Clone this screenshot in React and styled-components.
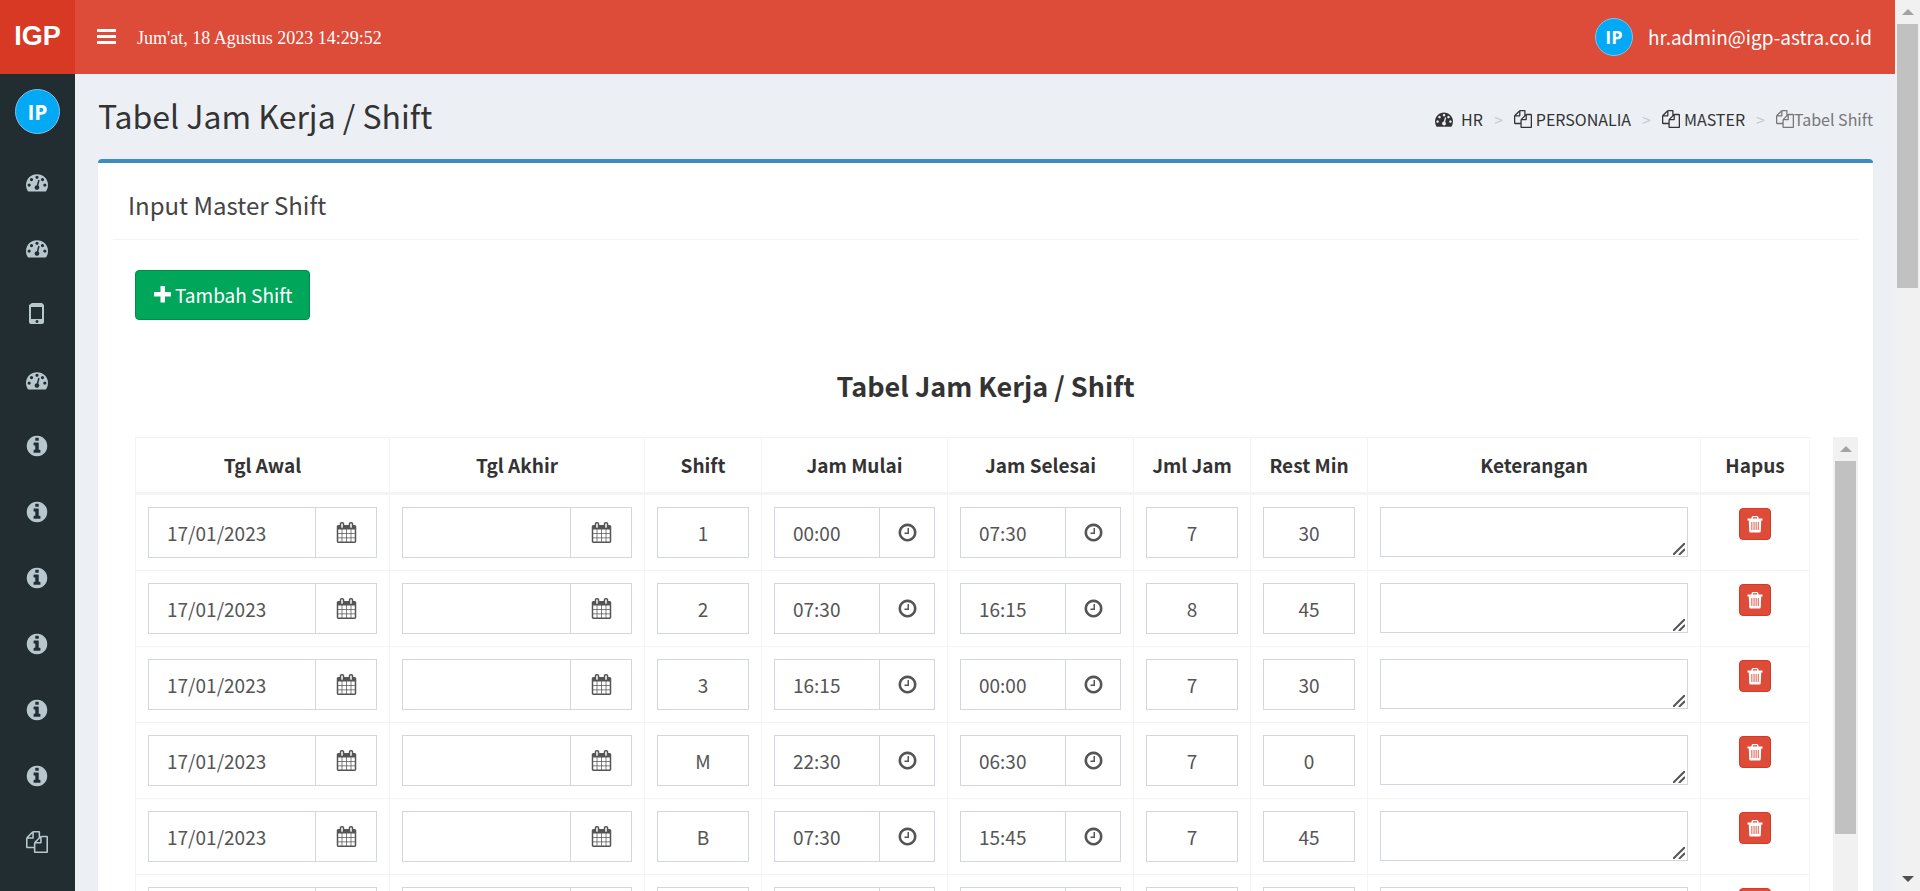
import React, { useState } from "react";
import styled, { createGlobalStyle } from "styled-components";

const GlobalStyle = createGlobalStyle`
  *, *::before, *::after { box-sizing: border-box; }
  body {
    margin: 0;
    font-family: "Noto Sans CJK SC", "Noto Sans", sans-serif;
    font-size: 19px;
    line-height: 27px;
    color: #333;
    background: #ecf0f5;
  }
`;

const ICONS = {
  gauge:
    "M384 1152q0-53-37.5-90.5t-90.5-37.5-90.5 37.5-37.5 90.5 37.5 90.5 90.5 37.5 90.5-37.5 37.5-90.5zm192-448q0-53-37.5-90.5t-90.5-37.5-90.5 37.5-37.5 90.5 37.5 90.5 90.5 37.5 90.5-37.5 37.5-90.5zm428 481l101-382q6-26-7.5-48.5t-38.5-29.5-48 6.5-30 39.5l-101 382q-60 5-107 43.5t-63 98.5q-20 77 20 146t117 89 146-20 89-117q16-60-6-117t-72-91zm660-33q0-53-37.5-90.5t-90.5-37.5-90.5 37.5-37.5 90.5 37.5 90.5 90.5 37.5 90.5-37.5 37.5-90.5zm-640-640q0-53-37.5-90.5t-90.5-37.5-90.5 37.5-37.5 90.5 37.5 90.5 90.5 37.5 90.5-37.5 37.5-90.5zm448 192q0-53-37.5-90.5t-90.5-37.5-90.5 37.5-37.5 90.5 37.5 90.5 90.5 37.5 90.5-37.5 37.5-90.5zm320 448q0 261-141 483-19 29-54 29h-1402q-35 0-54-29-141-221-141-483 0-182 71-348t191-286 286-191 348-71 348 71 286 191 191 286 71 348z",
  files:
    "M1696 384q40 0 68 28t28 68v1216q0 40-28 68t-68 28h-960q-40 0-68-28t-28-68v-288h-544q-40 0-68-28t-28-68v-672q0-40 20-88t48-76l408-408q28-28 76-48t88-20h416q40 0 68 28t28 68v328q68-40 128-40h416zm-544 213l-299 299h299v-299zm-640-384l-299 299h299v-299zm196 647l316-316v-416h-384v416q0 40-28 68t-68 28h-416v640h512v-256q0-40 20-88t48-76zm956 804v-1152h-384v416q0 40-28 68t-68 28h-416v640h896z",
  info:
    "M1152 1376v-160q0-14-9-23t-23-9h-96v-512q0-14-9-23t-23-9h-320q-14 0-23 9t-9 23v160q0 14 9 23t23 9h96v320h-96q-14 0-23 9t-9 23v160q0 14 9 23t23 9h448q14 0 23-9t9-23zm-128-896v-160q0-14-9-23t-23-9h-192q-14 0-23 9t-9 23v160q0 14 9 23t23 9h192q14 0 23-9t9-23zm640 416q0 209-103 385.5t-279.5 279.5-385.5 103-385.5-103-279.5-279.5-103-385.5 103-385.5 279.5-279.5 385.5-103 385.5 103 279.5 279.5 103 385.5z",
  clock:
    "M1024 544v448q0 14-9 23t-23 9h-320q-14 0-23-9t-9-23v-64q0-14 9-23t23-9h224v-352q0-14 9-23t23-9h64q14 0 23 9t9 23zm416 352q0-148-73-273t-198-198-273-73-273 73-198 198-73 273 73 273 198 198 273 73 273-73 198-198 73-273zm224 0q0 209-103 385.5t-279.5 279.5-385.5 103-385.5-103-279.5-279.5-103-385.5 103-385.5 279.5-279.5 385.5-103 385.5 103 279.5 279.5 103 385.5z",
  calendar:
    "M192 1664h288v-288h-288v288zm352 0h320v-288h-320v288zm-352-352h288v-320h-288v320zm352 0h320v-320h-320v320zm-352-384h288v-288h-288v288zm736 736h320v-288h-320v288zm-384-736h320v-288h-320v288zm768 736h288v-288h-288v288zm-384-352h320v-320h-320v320zm-352-864v-288q0-13-9.5-22.5t-22.5-9.5h-64q-13 0-22.5 9.5t-9.5 22.5v288q0 13 9.5 22.5t22.5 9.5h64q13 0 22.5-9.5t9.5-22.5zm736 864h288v-320h-288v320zm-384-384h320v-288h-320v288zm384 0h288v-288h-288v288zm32-480v-288q0-13-9.5-22.5t-22.5-9.5h-64q-13 0-22.5 9.5t-9.5 22.5v288q0 13 9.5 22.5t22.5 9.5h64q13 0 22.5-9.5t9.5-22.5zm384-64v1280q0 52-38 90t-90 38h-1408q-52 0-90-38t-38-90v-1280q0-52 38-90t90-38h128v-96q0-66 47-113t113-47h64q66 0 113 47t47 113v96h384v-96q0-66 47-113t113-47h64q66 0 113 47t47 113v96h128q52 0 90 38t38 90z",
};

const Svg = styled.svg`
  display: block;
  flex: none;
  fill: currentColor;
`;

const Icon = ({ name, size }) => (
  <Svg width={size} height={size} viewBox="0 0 1792 1792" aria-hidden="true">
    <path d={ICONS[name]} />
  </Svg>
);

const PhoneIcon = () => (
  <Svg width="22" height="22" viewBox="0 0 22 22" aria-hidden="true">
    <path
      fillRule="evenodd"
      d="M6 0h10l2 2v17q0 2-2 2H5q-2 0-2-2V2zM5 4v12h11V4zM11 17a1.500 1.500 0 1 0 .01 0z"
    />
  </Svg>
);

const BarsIcon = () => (
  <Svg width="19" height="16" viewBox="0 0 19 16" aria-hidden="true">
    <path d="M0 0h19v3H0zM0 6h19v3H0zM0 12h19v3H0z" />
  </Svg>
);

const PlusIcon = () => (
  <Svg width="17" height="17" viewBox="0 0 17 17" aria-hidden="true">
    <path d="M7 0h3.500q.5 0 .5.5V6h5.500q.5 0 .5.5V10q0 .5-.5.5H11V16q0 .5-.5.5H7q-.5 0-.5-.5v-5.500H.5Q0 10.500 0 10V6.500Q0 6 .5 6h6V.5Q6.500 0 7 0z" />
  </Svg>
);

const TrashIcon = () => (
  <Svg width="16" height="17" viewBox="0 0 16 17" aria-hidden="true">
    <path
      fillRule="evenodd"
      d="M4.500 2.500V1.500Q4.500 0 6 0h4Q11.500 0 11.500 1.500V2.500H15.500V4.500H14.200L13.800 15q0 1.500-1.500 1.500H3.700Q2.200 16.500 2.200 15L1.800 4.500H.5V2.500zM6 2.500h4V1.300H6zM4.400 6v8h.9V6zM6.600 6v8h.9V6zM8.700 6v8h.9V6zM10.800 6v8h.9V6z"
    />
  </Svg>
);

const Shell = styled.div`
  display: flex;
  height: 100vh;
  overflow: hidden;
`;

const Page = styled.div`
  flex: 1;
  min-width: 0;
  display: grid;
  grid-template-columns: 75px minmax(0, 1fr);
  grid-template-rows: 74px minmax(0, 1fr);
`;

const Brand = styled.a`
  display: flex;
  align-items: center;
  justify-content: center;
  padding-bottom: 2px;
  background: #d73925;
  color: #fff;
  font: bold 27px/40px "Liberation Sans", Arial, sans-serif;
  text-decoration: none;
`;

const TopBar = styled.header`
  display: flex;
  align-items: center;
  padding: 0 23px 0 22px;
  background: #dd4b39;
  color: #fff;
`;

const BareButton = styled.button`
  padding: 0;
  border: 0;
  background: none;
  color: inherit;
  cursor: pointer;
`;

const Clock = styled.time`
  margin: 2px auto 0 21px;
  font: 18px/24px "Liberation Serif", "Times New Roman", serif;
`;

const Account = styled.a`
  display: flex;
  align-items: center;
  gap: 15px;
  color: #fff;
  text-decoration: none;
`;

const AccountName = styled.span`
  padding-bottom: 2px;
`;

const Avatar = styled.span`
  flex: none;
  display: flex;
  align-items: center;
  justify-content: center;
  width: ${(p) => p.$size}px;
  height: ${(p) => p.$size}px;
  border: 1px solid #7cc3ea;
  border-radius: 50%;
  background: #03a9f4;
  color: #fff;
  font: bold ${(p) => p.$font}px/24px "Open Sans", sans-serif;
`;

const Sidebar = styled.nav`
  display: flex;
  flex-direction: column;
  align-items: center;
  padding-top: 15px;
  background: #222d32;
  overflow: hidden;
`;

const SideMenu = styled.ul`
  width: 100%;
  margin: 15px 0 0;
  padding: 0;
  list-style: none;
`;

const SideLink = styled.a`
  display: flex;
  align-items: center;
  justify-content: center;
  height: 66px;
  padding-right: 1px;
  color: #b8c7ce;
`;

const Main = styled.main`
  padding: 0 22px 0 23px;
  overflow: hidden;
`;

const ContentHeader = styled.div`
  display: flex;
  align-items: center;
  justify-content: space-between;
  height: 85px;
`;

const PageTitle = styled.h1`
  margin: 0 0 4px;
  font-size: 32px;
  line-height: 40px;
  font-weight: 400;
`;

const Crumbs = styled.ol`
  display: flex;
  align-items: center;
  margin: 5px 0 0;
  padding: 0;
  list-style: none;
  font-size: 16px;
  line-height: 24px;
`;

const Crumb = styled.li`
  display: flex;
  align-items: center;

  &:not(:first-child)::before {
    content: ">";
    margin: 0 11px;
    color: #ccc;
  }
`;

const CrumbLink = styled.a`
  display: flex;
  align-items: center;
  gap: ${(p) => p.$gap}px;
  color: ${(p) => (p.$active ? "#777" : "#333")};
  text-decoration: none;
`;

const Box = styled.section`
  border-top: 4px solid #3c8dbc;
  border-radius: 4px;
  background: #fff;
  box-shadow: 0 1px 1px rgba(0, 0, 0, 0.1);
  padding: 0 15px;
`;

const BoxTitle = styled.h2`
  margin: 0;
  padding: 26px 15px 18px;
  border-bottom: 1px solid #f4f4f4;
  font-size: 24px;
  line-height: 32px;
  font-weight: 400;
  color: #444;
`;

const BoxBody = styled.div`
  padding: 30px 0 0 22px;
`;

const AddButton = styled.button`
  display: flex;
  align-items: center;
  gap: 4px;
  height: 50px;
  padding: 0 17px 2px 18px;
  border: 1px solid #008d4c;
  border-radius: 4px;
  background: #00a65a;
  color: #fff;
  font: inherit;
  cursor: pointer;
`;

const TableTitle = styled.h3`
  margin: 46px 0 32px;
  font-size: 27px;
  line-height: 39px;
  font-weight: 700;
  text-align: center;
  padding-right: 22px;
`;

const TablePanel = styled.div`
  display: flex;
  gap: 23px;
`;

const Table = styled.table`
  flex: 1;
  min-width: 0;
  table-layout: fixed;
  border-collapse: separate;
  border-spacing: 0;
  border: solid #f4f4f4;
  border-width: 1px 0 0 1px;
`;

const Th = styled.th`
  height: 57px;
  padding: 0 0 2px;
  border: solid #f4f4f4;
  border-width: 0 1px 3px 0;
  font-weight: 700;
`;

const Td = styled.td`
  height: 76px;
  padding: 12px 12px 0;
  border: solid #f4f4f4;
  border-width: 0 1px 1px 0;
  vertical-align: top;
`;

const Group = styled.div`
  display: flex;
`;

const Field = styled.input`
  flex: 1;
  min-width: 0;
  width: 100%;
  height: 51px;
  padding: 0 18px;
  border: 1px solid #d2d6de;
  border-radius: 0;
  background: #fff;
  color: #555;
  font-family: inherit;
  font-size: 19px;
  text-align: ${(p) => (p.$center ? "center" : "left")};
`;

const Addon = styled.button`
  display: flex;
  align-items: center;
  justify-content: center;
  width: ${(p) => p.$width}px;
  padding: 0;
  border: 1px solid #d2d6de;
  border-left: 0;
  background: #fff;
  color: #555;
`;

const NoteWrap = styled.div`
  position: relative;
  display: flex;

  svg {
    position: absolute;
    right: 3px;
    bottom: 2px;
    color: #555;
  }
`;

const Note = styled.textarea`
  display: block;
  width: 100%;
  height: 50px;
  padding: 9px 18px;
  border: 1px solid #d2d6de;
  background: #fff;
  color: #555;
  font: inherit;
  resize: none;
`;

const DeleteButton = styled.button`
  display: flex;
  align-items: center;
  justify-content: center;
  width: 32px;
  height: 32px;
  margin: 1px auto 0;
  padding: 0;
  border: 1px solid #d73925;
  border-radius: 4px;
  background: #dd4b39;
  color: #fff;
`;

const Track = styled.div`
  flex: none;
  display: flex;
  flex-direction: column;
  align-items: center;
  width: 25px;
  background: #f1f1f1;
`;

const Arrow = styled.div`
  display: flex;
  align-items: center;
  justify-content: center;
  width: 25px;
  height: 24px;
  color: ${(p) => (p.$dark ? "#505050" : "#a3a3a3")};
`;

const Thumb = styled.div`
  width: 21px;
  height: ${(p) => p.$height};
  margin-bottom: auto;
  background: #c1c1c1;
`;

const ScrollBar = ({ thumb, down }) => (
  <Track aria-hidden="true">
    <Arrow>
      <Svg width="12" height="6" viewBox="0 0 12 6">
        <path d="M6 0l6 6H0z" />
      </Svg>
    </Arrow>
    <Thumb $height={thumb} />
    {down && (
      <Arrow $dark>
        <Svg width="12" height="6" viewBox="0 0 12 6">
          <path d="M0 0h12L6 6z" />
        </Svg>
      </Arrow>
    )}
  </Track>
);

const MENU = ["gauge", "gauge", "phone", "gauge", "info", "info", "info", "info", "info", "info", "files"];

const COLUMNS = [
  ["Tgl Awal", 254],
  ["Tgl Akhir", 255],
  ["Shift", 117],
  ["Jam Mulai", 186],
  ["Jam Selesai", 186],
  ["Jml Jam", 117],
  ["Rest Min", 117],
  ["Keterangan", null],
  ["Hapus", 109],
];

const SHIFTS = [
  ["17/01/2023", "", "1", "00:00", "07:30", "7", "30"],
  ["17/01/2023", "", "2", "07:30", "16:15", "8", "45"],
  ["17/01/2023", "", "3", "16:15", "00:00", "7", "30"],
  ["17/01/2023", "", "M", "22:30", "06:30", "7", "0"],
  ["17/01/2023", "", "B", "07:30", "15:45", "7", "45"],
  ["", "", "", "", "", "", ""],
];

const PICKERS = {
  0: { icon: "calendar", width: 61 },
  1: { icon: "calendar", width: 61 },
  3: { icon: "clock", width: 55 },
  4: { icon: "clock", width: 55 },
};

function ShiftCell({ value, column }) {
  const [text, setText] = useState(value);
  const picker = PICKERS[column];
  const label = COLUMNS[column][0];
  return (
    <Td>
      <Group>
        <Field
          aria-label={label}
          value={text}
          onChange={(e) => setText(e.target.value)}
          $center={!picker}
        />
        {picker && (
          <Addon type="button" aria-label={`Pilih ${label}`} $width={picker.width}>
            <Icon name={picker.icon} size={21} />
          </Addon>
        )}
      </Group>
    </Td>
  );
}

export default function App() {
  return (
    <>
      <GlobalStyle />
      <Shell>
        <Page>
          <Brand href="#">IGP</Brand>
          <TopBar>
            <BareButton type="button" aria-label="Menu">
              <BarsIcon />
            </BareButton>
            <Clock>Jum'at, 18 Agustus 2023 14:29:52</Clock>
            <Account href="#">
              <Avatar $size={38} $font={18}>IP</Avatar>
              <AccountName>hr.admin@igp-astra.co.id</AccountName>
            </Account>
          </TopBar>
          <Sidebar>
            <Avatar $size={45} $font={21}>IP</Avatar>
            <SideMenu>
              {MENU.map((name, i) => (
                <li key={i}>
                  <SideLink href="#" aria-label={`Menu ${i + 1}`}>
                    {name === "phone" ? <PhoneIcon /> : <Icon name={name} size={name === "info" ? 24 : 22} />}
                  </SideLink>
                </li>
              ))}
            </SideMenu>
          </Sidebar>
          <Main>
            <ContentHeader>
              <PageTitle>Tabel Jam Kerja / Shift</PageTitle>
              <Crumbs>
                <Crumb>
                  <CrumbLink href="#" $gap={8}><Icon name="gauge" size={18} />HR</CrumbLink>
                </Crumb>
                <Crumb>
                  <CrumbLink href="#" $gap={4}><Icon name="files" size={18} />PERSONALIA</CrumbLink>
                </Crumb>
                <Crumb>
                  <CrumbLink href="#" $gap={4}><Icon name="files" size={18} />MASTER</CrumbLink>
                </Crumb>
                <Crumb>
                  <CrumbLink as="span" $gap={0} $active><Icon name="files" size={18} />Tabel Shift</CrumbLink>
                </Crumb>
              </Crumbs>
            </ContentHeader>
            <Box>
              <BoxTitle>Input Master Shift</BoxTitle>
              <BoxBody>
                <AddButton type="button">
                  <PlusIcon />
                  Tambah Shift
                </AddButton>
                <TableTitle>Tabel Jam Kerja / Shift</TableTitle>
                <TablePanel>
                  <Table>
                    <colgroup>
                      {COLUMNS.map(([label, width]) => (
                        <col key={label} width={width || undefined} />
                      ))}
                    </colgroup>
                    <thead>
                      <tr>
                        {COLUMNS.map(([label]) => (
                          <Th key={label} scope="col">{label}</Th>
                        ))}
                      </tr>
                    </thead>
                    <tbody>
                      {SHIFTS.map((row, r) => (
                        <tr key={r}>
                          {row.map((value, c) => (
                            <ShiftCell key={c} value={value} column={c} />
                          ))}
                          <Td>
                            <NoteWrap>
                              <Note aria-label="Keterangan" />
                              <Svg width="12" height="12" viewBox="0 0 12 12" aria-hidden="true">
                                <path d="M0 12L12 0M6 12l6-6" stroke="currentColor" strokeWidth="2" />
                              </Svg>
                            </NoteWrap>
                          </Td>
                          <Td>
                            <DeleteButton type="button" aria-label="Hapus">
                              <TrashIcon />
                            </DeleteButton>
                          </Td>
                        </tr>
                      ))}
                    </tbody>
                  </Table>
                  <ScrollBar thumb="373px" />
                </TablePanel>
              </BoxBody>
            </Box>
          </Main>
        </Page>
        <ScrollBar thumb="264px" down />
      </Shell>
    </>
  );
}
